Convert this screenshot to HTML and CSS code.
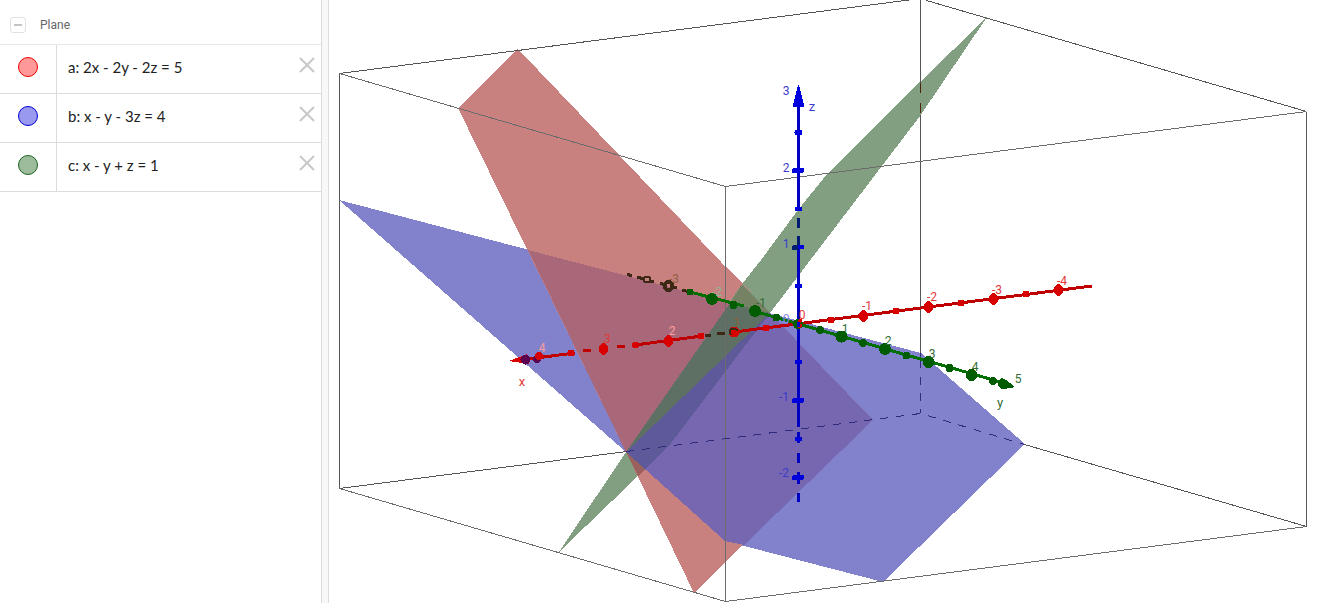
FILE: index.html
```html
<!DOCTYPE html>
<html lang="en">
<head>
    <meta charset="UTF-8">
    <meta name="viewport" content="width=device-width, initial-scale=1.0">
    <title>3D Planes</title>
    <link rel="stylesheet" href="styles.css">
</head>
<body>
    <div class="app">
        <!-- Algebra view -->
        <aside class="algebra">
            <div class="group-header">
                <button type="button" class="collapse" aria-label="Collapse Plane"></button>
                <h2>Plane</h2>
            </div>
            <ul class="rows">
                <li class="row">
                    <div class="marble-cell"><button type="button" class="marble marble-a" aria-label="Show or hide a"></button></div>
                    <span class="formula">a: 2x - 2y - 2z = 5</span>
                    <button type="button" class="remove" aria-label="Delete a">
                        <svg viewBox="0 0 16 16"><path d="M1 1L15 15M15 1L1 15"/></svg>
                    </button>
                </li>
                <li class="row">
                    <div class="marble-cell"><button type="button" class="marble marble-b" aria-label="Show or hide b"></button></div>
                    <span class="formula">b: x - y - 3z = 4</span>
                    <button type="button" class="remove" aria-label="Delete b">
                        <svg viewBox="0 0 16 16"><path d="M1 1L15 15M15 1L1 15"/></svg>
                    </button>
                </li>
                <li class="row">
                    <div class="marble-cell"><button type="button" class="marble marble-c" aria-label="Show or hide c"></button></div>
                    <span class="formula">c: x - y + z = 1</span>
                    <button type="button" class="remove" aria-label="Delete c">
                        <svg viewBox="0 0 16 16"><path d="M1 1L15 15M15 1L1 15"/></svg>
                    </button>
                </li>
            </ul>
        </aside>

        <div class="splitter"></div>

        <!-- 3D view -->
        <main class="view">
            <svg class="scene" viewBox="329 0 990 603" role="img" aria-label="Three planes in a clipping box">
                <!-- Planes -->
                <g class="planes">
                    <polygon class="green" points="987,17 920,82 827,174 798,210 761,260 742,284 626,452 559,552 638,476 668,447 920,116"/>
                    <polygon class="blue" points="339,200 921,353 1025,444 883,582 725,541 626,452"/>
                    <polygon class="red" points="518,49 458,108 626,452 694,593 744,544 725,540 626,452 742,284"/>
                    <polygon class="red" points="518,49 742,284 626,452"/>
                    <polygon class="red-blue" points="528,250 731,303 626,452"/>
                    <polygon class="blue-red" points="770,313 873,420 744,545 725,541 626,452"/>
                    <polygon class="red" points="725,266 760,300 742,284"/>
                    <polygon class="green-red" points="742,284 770,313 730,303"/>
                    <polygon class="green-all" points="730,303 770,313 626,452"/>
                    <polygon class="blue-green" points="770,313 668,447 645,469 626,452"/>
                    <polygon class="mixed" points="626,452 645,469 638,476"/>
                </g>

                <!-- Clipping box -->
                <g class="box">
                    <path d="M339.500 73.500L920.500 -1.500M926.500 0.500L1306.500 111.500M339.500 73.500V488.500L626.500 451.500M1306.500 111.500V526.500L1024.500 444.500M920.500 0V83M920.500 115V353"/>
                    <path class="front" d="M339.500 73.500L725.500 186.500L1306.500 111.500M725.500 186.500V601.500M339.500 488.500L725.500 601.500L1306.500 526.500"/>
                    <path class="hidden" d="M626.500 451.500L920.500 413.500L1024.500 444.500M920.500 377V413"/>
                    <path class="hidden-solid" d="M920.500 353V368"/>
                    <path class="hidden-green" d="M920.500 83V93M920.500 103V113"/>
                </g>

                <!-- z axis -->
                <g class="axis-z">
                    <path class="line" d="M798.500 100V210M798.500 246V427M798.500 432V443M798.500 453V463M798.500 472V484M798.500 493V502"/>
                    <path class="line-dark" d="M798.500 218V228M798.500 236V247"/>
                    <polygon points="798,85 799,85 804,105 804,107 793,107 793,105"/>
                    <ellipse cx="798.500" cy="132.500" rx="4" ry="3"/>
                    <rect x="792" y="168" width="12" height="5" rx="2"/>
                    <rect x="795" y="207" width="7" height="4"/>
                    <rect class="dark" x="792" y="245" width="8" height="5" rx="2"/>
                    <rect x="798" y="245" width="6" height="4"/>
                    <rect x="795" y="284" width="7" height="4"/>
                    <rect x="795" y="360" width="7" height="4"/>
                    <rect x="792" y="398" width="12" height="5" rx="2"/>
                    <rect x="795" y="437" width="7" height="4"/>
                    <rect x="792" y="475" width="12" height="5" rx="2"/>
                </g>

                <!-- x axis -->
                <g class="axis-x">
                    <path class="line" d="M528 359L575 353M583 351L591 350M617 347L625 346M635 345L702 336M734 332L1092 286"/>
                    <path class="line-dark" d="M705 336L711 335M717 334L725 333"/>
                    <polygon points="509,361 527,354 529,364"/>
                    <circle class="violet" cx="525.500" cy="359.500" r="5"/>
                    <circle class="violet" cx="537" cy="359" r="4"/>
                    <circle cx="539" cy="356" r="4"/>
                    <circle cx="571" cy="353" r="3.500"/>
                    <ellipse cx="603.500" cy="349" rx="4.500" ry="6"/>
                    <circle cx="635.500" cy="345" r="3.500"/>
                    <ellipse cx="668.500" cy="341" rx="4.500" ry="6"/>
                    <circle cx="701" cy="336" r="3.500"/>
                    <circle cx="734" cy="332" r="5.500"/>
                    <path class="brown-ring" d="M731 335C728 329 731 328 734 329C736 329 737 330 737 331"/>
                    <circle cx="766" cy="328" r="3.500"/>
                    <circle cx="831" cy="320" r="3.500"/>
                    <ellipse cx="863.500" cy="316" rx="4.500" ry="6"/>
                    <circle cx="896" cy="311" r="3.500"/>
                    <ellipse cx="928.500" cy="307" rx="4.500" ry="6"/>
                    <circle cx="961" cy="303" r="3.500"/>
                    <ellipse cx="993.500" cy="299" rx="4.500" ry="6"/>
                    <circle cx="1026" cy="294" r="3.500"/>
                    <ellipse cx="1058.500" cy="290" rx="4.500" ry="6"/>
                </g>

                <!-- y axis -->
                <g class="axis-y">
                    <path class="line-dark" d="M627 274L632 276M637 277L644 279M650 281L654 282M660 283L665 285M672 287L677 288M682 290L690 292"/>
                    <path class="line" d="M690 292L744 306M750 310L1004 383"/>
                    <circle class="ring" cx="647" cy="279.500" r="3"/>
                    <circle class="ring ring-big" cx="668.500" cy="286" r="4"/>
                    <circle cx="690" cy="292" r="3.500"/>
                    <circle cx="712" cy="299" r="6"/>
                    <circle cx="733.500" cy="305" r="4"/>
                    <circle cx="755" cy="311" r="6"/>
                    <circle cx="776.500" cy="317.500" r="4"/>
                    <circle cx="820" cy="330" r="4"/>
                    <circle cx="841.500" cy="336.500" r="6"/>
                    <circle cx="863" cy="343" r="4"/>
                    <circle cx="885" cy="349" r="6"/>
                    <circle cx="906.500" cy="355.500" r="4"/>
                    <circle cx="928.500" cy="362" r="6"/>
                    <circle cx="949.500" cy="368" r="4"/>
                    <circle cx="971.500" cy="375" r="6"/>
                    <circle cx="993" cy="381" r="4"/>
                    <polygon points="998,381 1002,378 1006,380 1014,386 1012,388 1002,389 998,386"/>
                </g>

                <!-- Origin -->
                <circle class="origin-green" cx="798" cy="324" r="5"/>
                <circle class="origin-red" cx="800" cy="321" r="2"/>
                <circle class="origin-red" cx="800" cy="326" r="2"/>
                <rect class="origin-blue" x="797" y="322" width="3" height="5"/>

                <!-- Labels -->
                <g class="labels labels-z">
                    <text x="786" y="95">3</text>
                    <text class="name" x="812" y="111">z</text>
                    <text x="786" y="172">2</text>
                    <text x="786" y="248">1</text>
                    <text class="pale" x="786" y="323">0</text>
                    <text x="784" y="401">-1</text>
                    <text x="784" y="477">-2</text>
                </g>
                <g class="labels labels-x">
                    <text class="name" x="522" y="386">x</text>
                    <text class="pale" x="542" y="352">4</text>
                    <text x="607" y="343">3</text>
                    <text class="pale" x="672" y="335">2</text>
                    <text class="brown" x="737" y="327">1</text>
                    <text x="802" y="319">0</text>
                    <text x="867" y="310">-1</text>
                    <text x="932" y="301">-2</text>
                    <text x="997" y="294">-3</text>
                    <text x="1062" y="285">-4</text>
                </g>
                <g class="labels labels-y">
                    <text class="brown" x="674" y="283">-3</text>
                    <text class="pale" x="717" y="296">-2</text>
                    <text x="761" y="307">-1</text>
                    <text x="845" y="333">1</text>
                    <text x="888" y="345">2</text>
                    <text x="932" y="358">3</text>
                    <text x="975" y="371">4</text>
                    <text x="1018" y="383">5</text>
                    <text class="name" x="1000" y="407">y</text>
                </g>
            </svg>
        </main>
    </div>
</body>
</html>
```
FILE: styles.css
```css
/* General Styling */
* {
    box-sizing: border-box;
}

body {
    margin: 0;
    background-color: white;
    font-family: Roboto, sans-serif;
}

button {
    padding: 0;
    background: none;
    border: none;
    cursor: pointer;
}

.app {
    display: flex;
    min-height: 100vh;
}

/* Algebra view */
.algebra {
    flex: 0 0 321px;
}

.group-header {
    display: flex;
    align-items: center;
    gap: 14px;
    height: 45px;
    padding: 5px 10px 0;
    border-bottom: 1px solid #e8e8e8;
}

.group-header h2 {
    margin: 0;
    font-size: 12px;
    font-weight: 400;
    color: #666;
}

.collapse {
    display: flex;
    align-items: center;
    justify-content: center;
    width: 16px;
    height: 16px;
    border: 1px solid #e2e2e2;
    border-radius: 3px;
}

.collapse::before {
    content: "";
    width: 8px;
    height: 2px;
    background-color: #c4c4c4;
}

.rows {
    margin: 0;
    padding: 0;
    list-style: none;
}

.row {
    display: flex;
    height: 49px;
    border-bottom: 1px solid #dcdcdc;
}

.marble-cell {
    width: 57px;
    padding: 12px 18px;
    border-right: 1px solid #dcdcdc;
}

.marble {
    display: block;
    width: 20px;
    height: 20px;
    border: 1px solid;
    border-radius: 50%;
}

.marble-a {
    background-color: #ff9999;
    border-color: #e80000;
}

.marble-b {
    background-color: #9999f0;
    border-color: #0000d0;
}

.marble-c {
    background-color: #9cbc9c;
    border-color: #1c641c;
}

.formula {
    flex: 1;
    padding-left: 11px;
    font-family: Lato, sans-serif;
    font-size: 15px;
    line-height: 45px;
    color: #222;
}

.remove {
    align-self: flex-start;
    width: 16px;
    height: 16px;
    margin: 12px 6px 0 0;
}

.remove svg {
    display: block;
    stroke: #c8c8c8;
    stroke-width: 2;
}

.splitter {
    flex: 0 0 8px;
    background-color: #f8f8f8;
    border-left: 1px solid #dcdcdc;
    border-right: 1px solid #dcdcdc;
}

/* 3D view */
.view {
    flex: 1;
    min-width: 0;
}

.scene {
    display: block;
    width: 100%;
    shape-rendering: crispEdges;
}

.red { fill: #c8817f; }
.blue { fill: #8282cc; }
.green { fill: #829f82; }
.red-blue { fill: #a96879; }
.blue-red { fill: #7767b1; }
.green-red { fill: #758263; }
.green-all { fill: #5e7063; }
.blue-green { fill: #5e5999; }
.mixed { fill: #9b5f5c; }

.box path {
    fill: none;
    stroke: #555;
}

.box .front { stroke: #6c6c6c; }

.box .hidden {
    stroke: #2f2a7a;
    stroke-dasharray: 8 8;
}

.box .hidden-solid { stroke: #2f2a7a; }
.box .hidden-green { stroke: #4a2408; }

/* Axes */
.line,
.line-dark {
    fill: none;
    stroke-width: 3;
}

.axis-x { fill: #d80000; }
.axis-x .line { stroke: #c00000; }
.axis-x .violet { fill: #5c0050; }

.axis-y { fill: #005c00; }
.axis-y .line { stroke: #007000; }

.axis-x .line-dark,
.axis-y .line-dark {
    stroke: #3c2814;
}

.ring,
.brown-ring {
    fill: none;
    stroke: #3c2814;
    stroke-width: 2;
}

.ring-big { stroke-width: 4; }

.axis-z { fill: #0000dc; }
.axis-z .line { stroke: #0000c0; }
.axis-z .line-dark { stroke: #001c70; }
.axis-z .dark { fill: #001c70; }

.origin-green { fill: #005c00; }
.origin-red { fill: #e00000; }
.origin-blue { fill: #0000c8; }

/* Axis labels */
.labels {
    font-family: Roboto, sans-serif;
    font-size: 12px;
    text-anchor: middle;
}

.labels .name { font-size: 13px; }

.labels-x { fill: #e03838; }
.labels-x .pale { fill: #ff9c9c; }
.labels-y { fill: #346c34; }
.labels-y .pale { fill: #94b494; }
.labels-z { fill: #3c3ccc; }
.labels-z .pale { fill: #8888f0; }
.labels .brown { fill: #906040; }
```
